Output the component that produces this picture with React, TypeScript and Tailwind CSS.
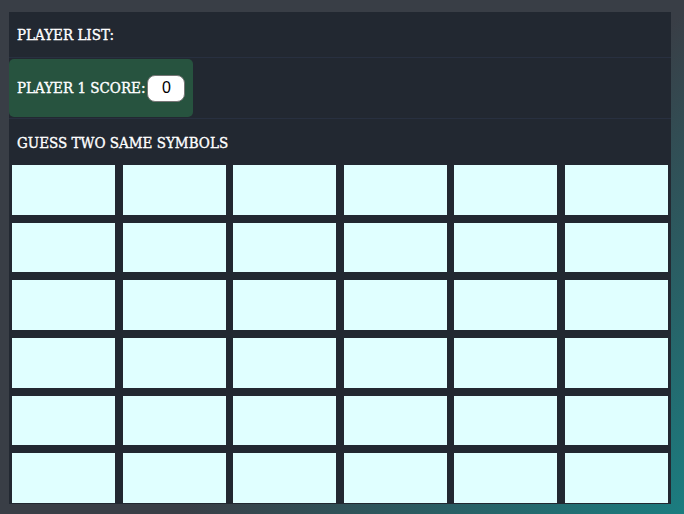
const cells = Array.from({ length: 36 }, (_, i) => i);

export default function App() {
  return (
    <div className="h-[514px] w-[684px] bg-[linear-gradient(135deg,#393e46_0%,#393e46_58%,#1b7d80_100%)] pt-[12px] pl-[9px]">
      <div
        className="flex w-[662px] flex-col whitespace-nowrap bg-[#222831] text-[15px] text-white font-stretch-condensed [-webkit-text-stroke:0.35px_#fff]"
        style={{ fontFamily: '"DejaVu Serif", serif' }}
      >
        <div className="flex h-[46px] items-center border-b border-[#283040] pt-[1px] pl-[8px]">
          PLAYER LIST:
        </div>
        <div className="flex h-[61px] items-center border-b border-[#283040]">
          <div className="flex h-[58px] w-[184px] items-center gap-[2px] rounded-[5px] bg-[#27533f] pl-[8px]">
            <span>PLAYER 1 SCORE:</span>
            <span
              className="flex h-[27px] w-[38px] items-center justify-center rounded-[8px] border border-[#767676] bg-white text-[16px] text-black font-stretch-normal [-webkit-text-stroke:0px_#000]"
              style={{ fontFamily: '"Liberation Sans", Arial, sans-serif' }}
            >
              0
            </span>
          </div>
        </div>
        <div className="flex h-[46px] items-center pt-[2px] pl-[8px]">GUESS TWO SAME SYMBOLS</div>
        <div className="grid h-[339px] grid-cols-6 grid-rows-6 gap-x-[7.6px] gap-y-[8px] px-[3px] pb-[1px]">
          {cells.map((i) => (
            <div key={i} className="bg-[#e0ffff]" />
          ))}
        </div>
      </div>
    </div>
  );
}
